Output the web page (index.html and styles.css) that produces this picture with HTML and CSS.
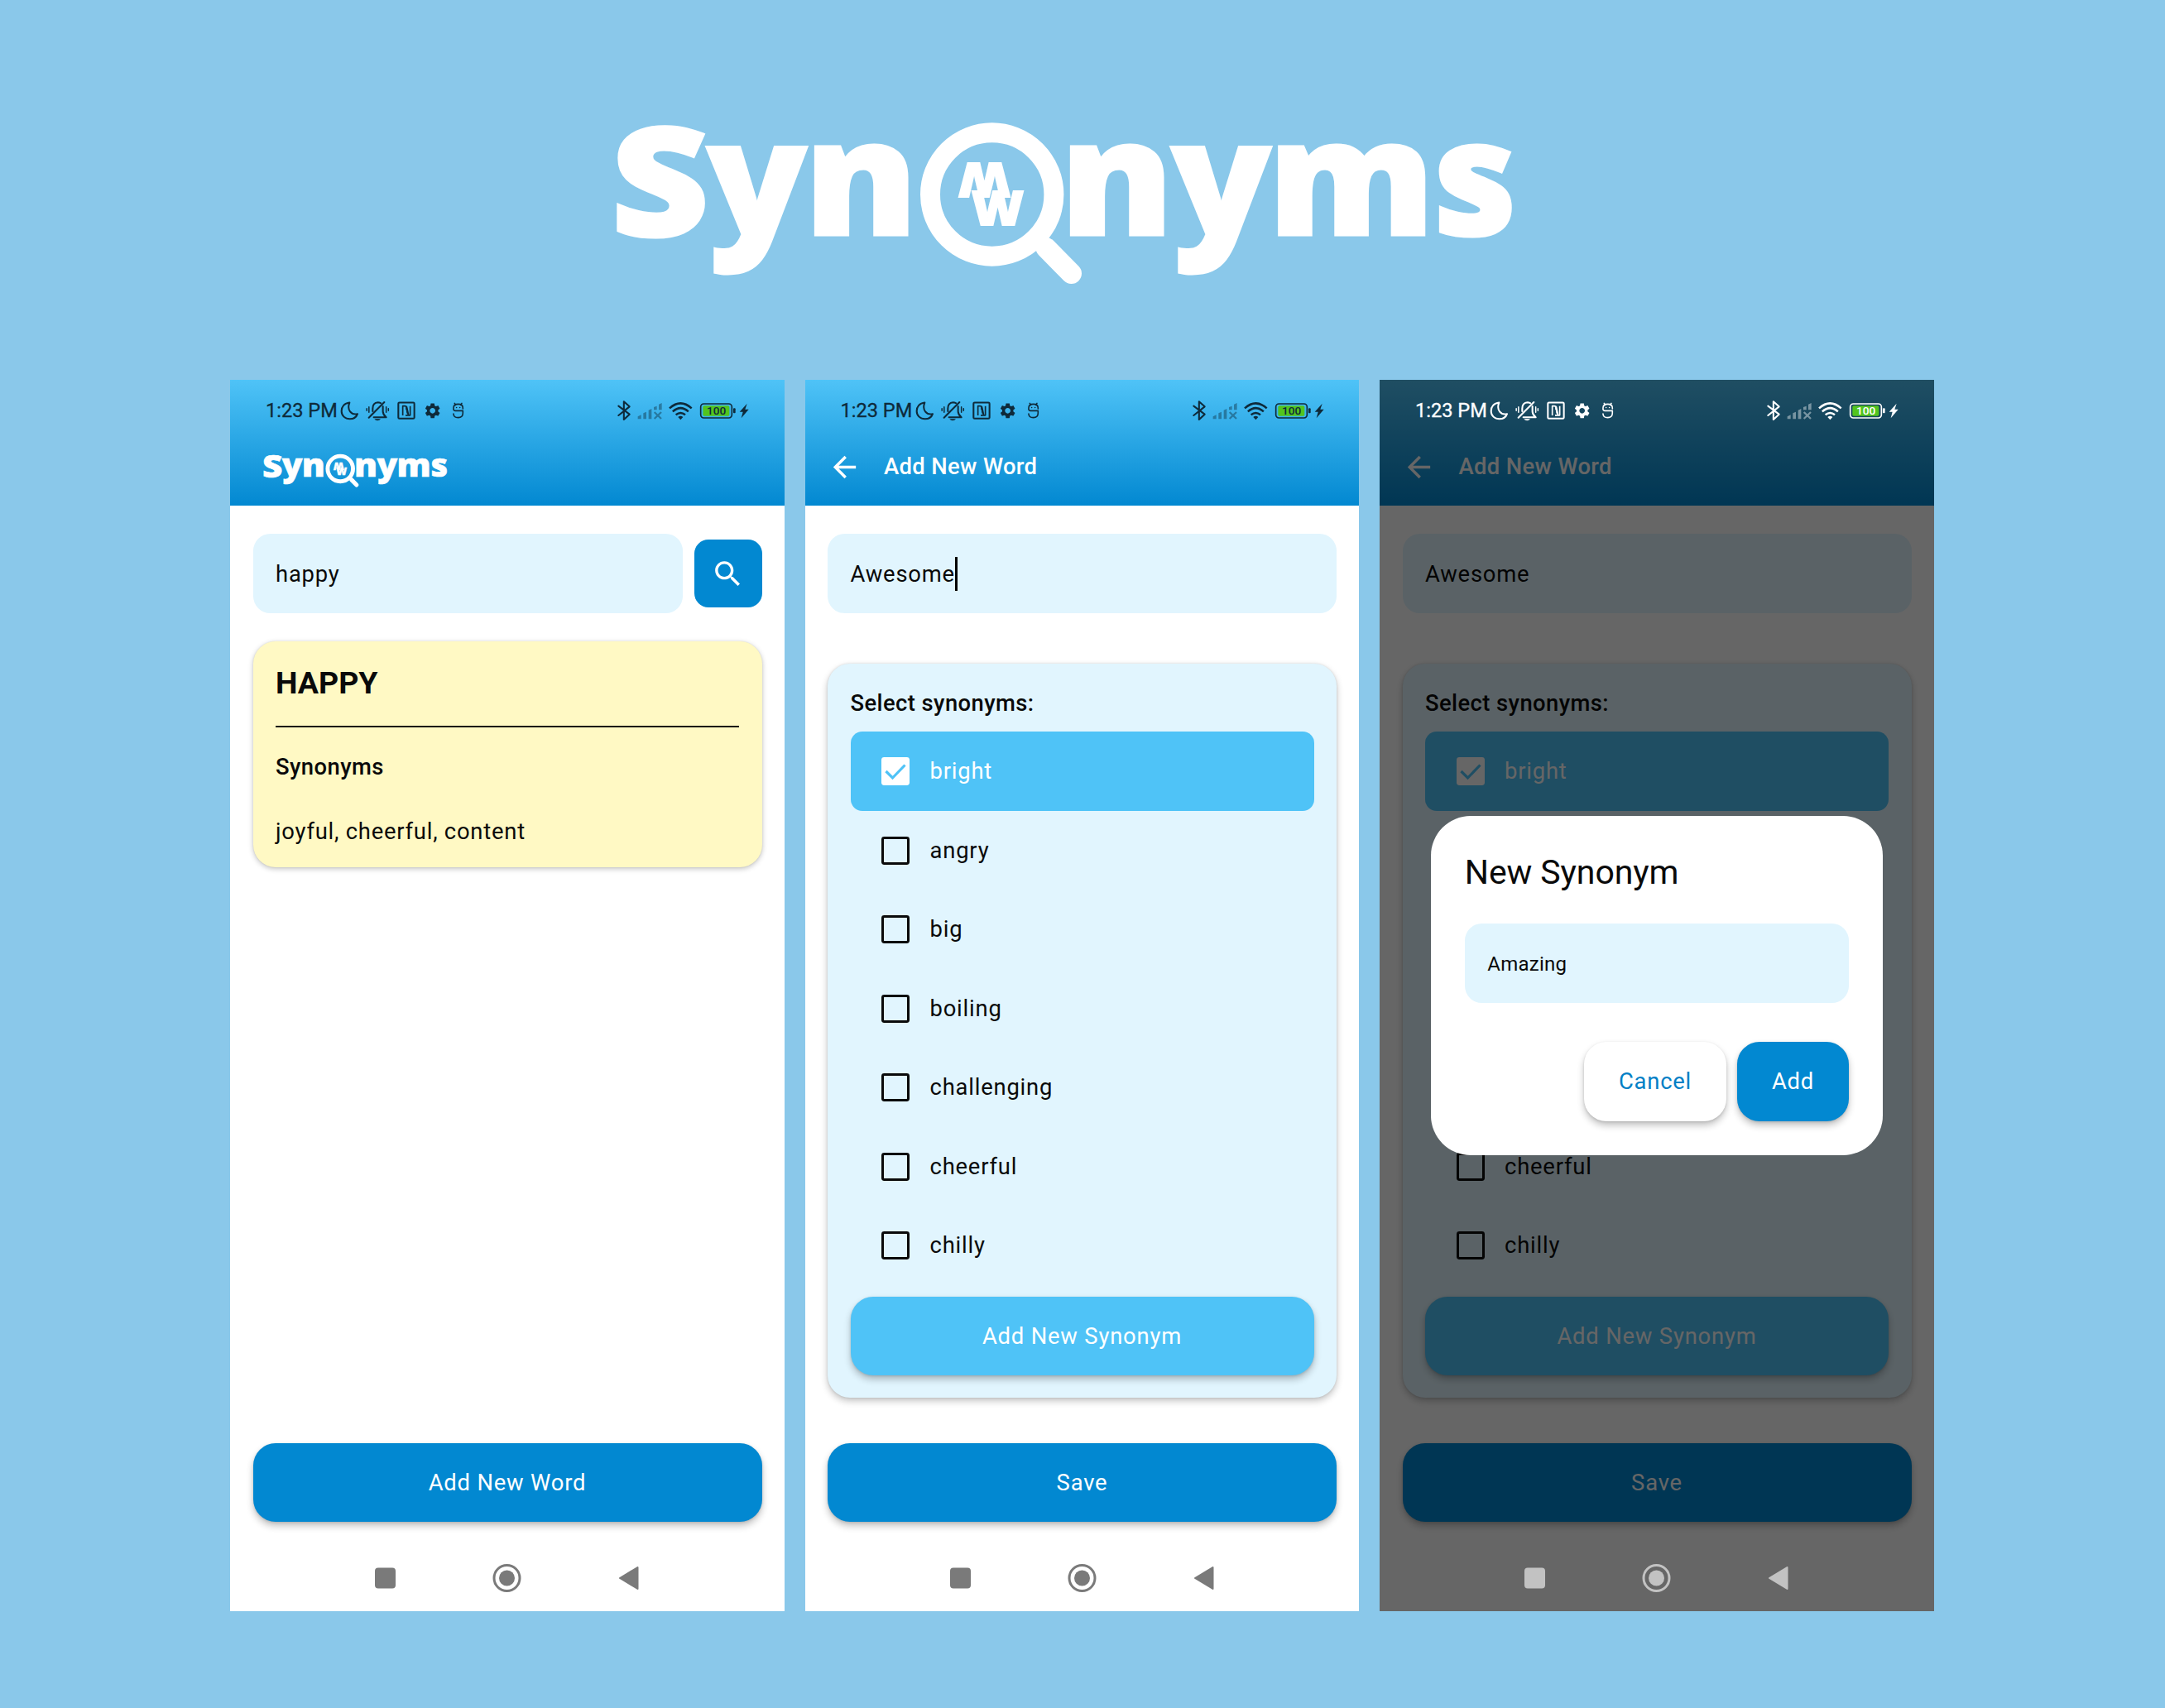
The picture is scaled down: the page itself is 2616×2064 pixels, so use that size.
FILE: index.html
```html
<!DOCTYPE html>
<html lang="en">
<head>
<meta charset="utf-8">
<title>Synonyms</title>
<link rel="stylesheet" href="styles.css">
</head>
<body>
<svg class="defs" aria-hidden="true">
  <symbol id="logo" viewBox="744 140 1088 210" overflow="visible">
    <g class="logo-word">
      <text class="logo-cap" x="738" y="285" textLength="119" lengthAdjust="spacingAndGlyphs">S</text>
      <text x="854" y="283.500" textLength="121" lengthAdjust="spacingAndGlyphs">y</text>
      <text x="972" y="283.500" textLength="137" lengthAdjust="spacingAndGlyphs">n</text>
      <text x="1281" y="283.500" textLength="137" lengthAdjust="spacingAndGlyphs">n</text>
      <text x="1415" y="283.500" textLength="121" lengthAdjust="spacingAndGlyphs">y</text>
      <text x="1532.500" y="283.500" textLength="201" lengthAdjust="spacingAndGlyphs">m</text>
      <text x="1732" y="283.500" textLength="101" lengthAdjust="spacingAndGlyphs">s</text>
    </g>
    <circle cx="1198.7" cy="235" r="74.7" fill="none" stroke="#fff" stroke-width="24"/>
    <path d="M1264 299.500L1294.500 330.500" stroke="#fff" stroke-width="25" stroke-linecap="round"/>
    <g class="logo-mark">
      <text x="1174" y="271.500" textLength="63" lengthAdjust="spacingAndGlyphs">W</text>
      <text x="1174" y="271.500" textLength="63" lengthAdjust="spacingAndGlyphs" transform="rotate(180 1197.500 234)">W</text>
    </g>
  </symbol>
  <symbol id="status-left" viewBox="420 95 460 90">
    <g fill="none" stroke="currentColor" stroke-width="6.200" stroke-linecap="round" stroke-linejoin="round">
      <path d="M457 108.500C438 110 428 124 428 139C428 156 441 168 458 168C472 168 482 161 486 149.500C464 155 446 135 457 108.500Z"/>
      <path d="M527 163L583 107"/>
      <path d="M541 140V130C541 117 549 109 560 108C564 108 567 109 570 110.500M578 122V141C578 151 583 156 590 162H545"/>
      <path d="M519.500 130V138M527.500 124V144M590 124V144M598 130V138" stroke-width="4.500"/>
      <rect x="634" y="108.500" width="58" height="58" rx="4"/>
      <path d="M650 155V121H658Q662 121 663 125L667 148M660 154.500H677V121M663 121V134" stroke-width="5" stroke-linecap="butt"/>
      <path d="M664 124L670 151" stroke-width="6"/>
      <path d="M834 134V128Q834 114 851 114Q868 114 868 128V131M838 111L842 117M864 111L860 117M834 132Q834 138 841 138H868V147Q868 163 851 163Q834 163 834 149" stroke-width="4.800"/>
    </g>
    <g fill="currentColor">
      <path d="M547 168H570Q566 174 558.500 174Q551 174 547 168Z"/>
      <circle cx="845" cy="126.500" r="2.500"/><circle cx="857" cy="126.500" r="2.500"/>
      <path transform="translate(724.500 104.500) scale(2.800)" d="M19.140 12.940c.04-.3.060-.61.060-.94 0-.32-.02-.64-.07-.94l2.030-1.580c.18-.14.230-.41.120-.61l-1.920-3.320c-.12-.22-.37-.29-.59-.22l-2.390.96c-.5-.38-1.030-.7-1.620-.94l-.36-2.540c-.04-.24-.24-.41-.48-.41h-3.840c-.24 0-.43.170-.47.410l-.36 2.540c-.59.240-1.130.570-1.620.94l-2.390-.96c-.22-.08-.47 0-.59.220L2.740 8.870c-.12.210-.08.470.12.610l2.030 1.580c-.05.3-.09.630-.09.940s.02.640.07.940l-2.030 1.580c-.18.140-.23.410-.12.610l1.920 3.320c.12.220.37.290.59.220l2.390-.96c.5.380 1.030.7 1.620.94l.36 2.540c.05.240.24.410.48.410h3.840c.24 0 .44-.17.470-.41l.36-2.540c.59-.24 1.130-.56 1.620-.94l2.390.96c.22.080.47 0 .59-.22l1.920-3.320c.12-.22.070-.47-.12-.61l-2.010-1.580zM12 15.600c-1.980 0-3.600-1.620-3.600-3.600s1.620-3.600 3.600-3.600 3.600 1.620 3.600 3.600-1.620 3.600-3.600 3.600z"/>
    </g>
  </symbol>
  <symbol id="status-right" viewBox="130 95 495 90" overflow="visible">
    <g fill="none" stroke="currentColor" stroke-width="6.200" stroke-linejoin="round">
      <path d="M143 121L183 151L162.500 170V105L183 123L143 155" stroke-linecap="round"/>
      <path d="M328 129Q368 93 408 129M339.500 141Q368 116 396.500 141M351 153Q368 139 385 153" stroke-width="7.500"/>
      <rect x="441" y="113" width="113" height="51" rx="11" stroke-width="5"/>
    </g>
    <g fill="currentColor">
      <path d="M359 161Q368 153 377 161L368 171Z"/>
      <rect x="559" y="129" width="8" height="18" rx="3"/>
      <path d="M609 112L582 142H594L588 165L615 133H602Z"/>
    </g>
    <g fill="currentColor" opacity=".42">
      <path d="M213 168V159L225 153V168ZM233 168V147L244 142V168ZM252 168V136L263 131V168ZM271 135V125L282 121V135ZM289 135V115L300 110V135Z"/>
      <path d="M273 143L298 167M298 143L273 167" stroke="currentColor" stroke-width="7"/>
    </g>
    <rect x="449" y="120" width="96" height="37" rx="5" fill="#52c41e"/>
    <text class="battery-text" x="498" y="152" text-anchor="middle" textLength="70" lengthAdjust="spacingAndGlyphs">100</text>
  </symbol>
  <symbol id="arrow" viewBox="0 0 24 24"><path fill="currentColor" d="M20 11H7.830l5.590-5.590L12 4l-8 8 8 8 1.410-1.410L7.830 13H20z"/></symbol>
  <symbol id="nav-icons" viewBox="0 0 320 36">
    <rect x="0" y="5.500" width="25" height="25" rx="4" fill="currentColor"/>
    <circle cx="159.500" cy="18" r="15.500" fill="none" stroke="currentColor" stroke-width="3"/>
    <circle cx="159.500" cy="18" r="9.500" fill="currentColor"/>
    <path d="M296 18L317.500 5V31Z" fill="currentColor" stroke="currentColor" stroke-width="2" stroke-linejoin="round"/>
  </symbol>
</svg>

<main class="board">
  <svg class="hero" role="img" aria-label="Synonyms"><use href="#logo"/></svg>

  <div class="phones">
    <section class="phone">
      <header class="head">
        <div class="status"><span class="time">1:23 PM</span><svg class="st-left"><use href="#status-left"/></svg><svg class="st-right"><use href="#status-right"/></svg></div>
        <div class="appbar"><svg class="small-logo" role="img" aria-label="Synonyms"><use href="#logo"/></svg></div>
      </header>
      <div class="body">
        <div class="search">
          <div class="field">happy</div>
          <div class="search-btn"><svg viewBox="0 0 24 24"><path fill="#fff" d="M15.500 14h-.79l-.28-.27C15.410 12.590 16 11.110 16 9.500 16 5.910 13.090 3 9.500 3S3 5.910 3 9.500 5.910 16 9.500 16c1.610 0 3.090-.59 4.230-1.570l.27.280v.79l5 4.990L20.490 19l-4.990-5zm-6 0C7.010 14 5 11.990 5 9.500S7.010 5 9.500 5 14 7.010 14 9.500 11.990 14 9.500 14z"/></svg></div>
        </div>
        <article class="word-card">
          <h2>HAPPY</h2>
          <h3>Synonyms</h3>
          <p>joyful, cheerful, content</p>
        </article>
        <div class="btn main-btn">Add New Word</div>
      </div>
      <svg class="nav"><use href="#nav-icons"/></svg>
    </section>

    <section class="phone">
      <header class="head">
        <div class="status"><span class="time">1:23 PM</span><svg class="st-left"><use href="#status-left"/></svg><svg class="st-right"><use href="#status-right"/></svg></div>
        <div class="appbar"><svg class="back"><use href="#arrow"/></svg><h1>Add New Word</h1></div>
      </header>
      <div class="body">
        <div class="field">Awesome<span class="caret"></span></div>
        <div class="list-card">
          <h3>Select synonyms:</h3>
          <div class="item on"><svg class="box" viewBox="0 0 34 34"><rect width="34" height="34" rx="3.400" fill="#fff"/><path d="M5.500 17L13.500 25L28.500 9.500" fill="none" stroke="#4fc3f7" stroke-width="3.200"/></svg>bright</div>
          <div class="item"><span class="box"></span>angry</div>
          <div class="item"><span class="box"></span>big</div>
          <div class="item"><span class="box"></span>boiling</div>
          <div class="item"><span class="box"></span>challenging</div>
          <div class="item"><span class="box"></span>cheerful</div>
          <div class="item"><span class="box"></span>chilly</div>
          <div class="btn light">Add New Synonym</div>
        </div>
        <div class="btn main-btn">Save</div>
      </div>
      <svg class="nav"><use href="#nav-icons"/></svg>
    </section>

    <section class="phone dimmed">
      <header class="head">
        <div class="status"><span class="time">1:23 PM</span><svg class="st-left"><use href="#status-left"/></svg><svg class="st-right"><use href="#status-right"/></svg></div>
        <div class="appbar"><svg class="back"><use href="#arrow"/></svg><h1>Add New Word</h1></div>
      </header>
      <div class="body">
        <div class="field">Awesome</div>
        <div class="list-card">
          <h3>Select synonyms:</h3>
          <div class="item on"><svg class="box" viewBox="0 0 34 34"><rect width="34" height="34" rx="3.400" fill="#fff"/><path d="M5.500 17L13.500 25L28.500 9.500" fill="none" stroke="#4fc3f7" stroke-width="3.200"/></svg>bright</div>
          <div class="item"></div>
          <div class="item"></div>
          <div class="item"></div>
          <div class="item"></div>
          <div class="item"><span class="box"></span>cheerful</div>
          <div class="item"><span class="box"></span>chilly</div>
          <div class="btn light">Add New Synonym</div>
        </div>
        <div class="btn main-btn">Save</div>
      </div>
      <svg class="nav"><use href="#nav-icons"/></svg>
      <div class="scrim">
        <div class="dialog">
          <h2>New Synonym</h2>
          <div class="field">Amazing</div>
          <div class="actions"><div class="btn cancel">Cancel</div><div class="btn add">Add</div></div>
        </div>
      </div>
    </section>
  </div>
</main>
</body>
</html>
```
FILE: styles.css
```css
* { box-sizing: border-box; }
body {
  margin: 0;
  background: #8ac8ea;
  font-family: Roboto, "Liberation Sans", sans-serif;
  font-size: 27.4px;
  letter-spacing: .8px;
  color: #0a0a0a;
}
h1, h2, h3, p { margin: 0; }
svg { display: block; flex: none; }
.defs { position: absolute; width: 0; height: 0; }

.board {
  width: 2616px;
  height: 2064px;
  padding: 140px 0 0 278px;
  overflow: hidden;
}
.hero { width: 1088px; height: 210px; margin-left: 466px; overflow: visible; }
.logo-word {
  font-family: "Open Sans", sans-serif;
  font-weight: 800;
  font-size: 194px;
  letter-spacing: 0;
  fill: #fff;
  stroke: #fff;
  stroke-width: 3px;
}
.logo-cap { font-size: 182px; }
.logo-mark {
  font-family: "Open Sans", sans-serif;
  font-weight: 800;
  font-size: 57px;
  letter-spacing: 0;
  fill: #fff;
  stroke: #fff;
  stroke-width: 2px;
}

.phones { display: flex; gap: 25px; margin-top: 109px; }
.phone {
  position: relative;
  display: flex;
  flex-direction: column;
  flex: none;
  width: 669.500px;
  height: 1488px;
  background: #fff;
}
.head {
  height: 152px;
  background: linear-gradient(#4fc3f7, #0288d1);
  color: #fff;
}
.status {
  display: flex;
  align-items: center;
  height: 74px;
  padding: 0 39.200px 0 43px;
  color: #0e2a3a;
}
.time {
  width: 89px;
  font-size: 23.600px;
  letter-spacing: 0;
  white-space: nowrap;
  -webkit-text-stroke: .3px currentColor;
}
.st-left { width: 153.300px; height: 30px; margin-top: 1px; }
.st-right { width: 165px; height: 30px; margin: 1px 0 0 auto; overflow: visible; }
.battery-text { font-size: 38px; font-weight: 500; letter-spacing: 0; fill: currentColor; }
.appbar { display: flex; align-items: center; height: 62px; padding-left: 27px; }
.small-logo { width: 223px; height: 43px; margin: 8px 0 0 13px; overflow: visible; }
.back { width: 41px; height: 41px; }
.appbar h1 {
  margin-left: 27.500px;
  font-size: 27.4px;
  font-weight: 500;
  letter-spacing: .35px;
}

.body {
  flex: 1;
  display: flex;
  flex-direction: column;
  padding: 34px 27px 28px 27.500px;
}
.field {
  display: flex;
  align-items: center;
  flex: none;
  height: 96px;
  padding: 1px 0 0 27.500px;
  border-radius: 20.500px;
  background: #e1f5fe;
}
.caret { width: 3.500px; height: 41px; background: #000; }
.search { display: flex; align-items: center; gap: 14px; }
.search .field { flex: 1; }
.search-btn {
  display: grid;
  place-items: center;
  width: 82px;
  height: 82px;
  border-radius: 17px;
  background: #0288d1;
}
.search-btn svg { width: 41px; height: 41px; }

.word-card {
  height: 273px;
  margin-top: 34px;
  padding: 26px 27.500px;
  border-radius: 27px;
  background: #fff9c4;
  box-shadow: 0 2px 6px rgba(0, 0, 0, .24), 0 0 2px rgba(0, 0, 0, .1);
}
.word-card h2 {
  height: 78px;
  border-bottom: 2px solid #111;
  font-size: 37.500px;
  line-height: 48px;
  letter-spacing: 0;
}
h3 { font-size: 27.4px; line-height: 41px; font-weight: 500; letter-spacing: .42px; }
.word-card h3 { margin-top: 28px; }
.word-card p { margin-top: 36.500px; line-height: 41px; letter-spacing: .77px; }

.btn {
  display: flex;
  align-items: center;
  justify-content: center;
  flex: none;
  height: 95.500px;
  padding-top: 1px;
  border-radius: 27px;
  color: #fff;
  background: #0288d1;
  box-shadow: 0 5px 9px rgba(0, 0, 0, .24), 0 1px 3px rgba(0, 0, 0, .12);
}
.main-btn { margin-top: auto; }

.list-card {
  margin-top: 61px;
  padding: 28px 27.500px 26.500px;
  border-radius: 27px;
  background: #e1f5fe;
  box-shadow: 0 4px 9px rgba(0, 0, 0, .24), 0 0 3px rgba(0, 0, 0, .12);
}
.list-card h3 { margin-bottom: 13px; }
.item {
  display: flex;
  align-items: center;
  gap: 24.500px;
  height: 95.500px;
  padding: .5px 0 0 37.500px;
}
.item.on { border-radius: 14px; background: #4fc3f7; color: #fff; }
.box { width: 34px; height: 34px; }
span.box { border: 3.400px solid #0a0a0a; border-radius: 3.400px; }
.light { margin-top: 14px; background: #4fc3f7; }

.nav { width: 320px; height: 36px; margin: 22px 0 22px 175px; color: #7a7a7a; }

.dimmed .status { position: relative; z-index: 2; color: #fff; }
.dimmed .nav { position: relative; z-index: 2; color: #c2c2c2; }
.scrim {
  position: absolute;
  inset: 0;
  z-index: 1;
  display: flex;
  justify-content: center;
  align-items: flex-start;
  padding-top: 527px;
  background: rgba(0, 0, 0, .6);
}
.dialog {
  width: 546px;
  height: 409.500px;
  padding: 41px;
  border-radius: 48px;
  background: #fff;
}
.dialog h2 { font-size: 41px; line-height: 55px; font-weight: 400; letter-spacing: -.1px; }
.dialog .field { margin-top: 34px; font-size: 24px; letter-spacing: .25px; }
.actions { display: flex; justify-content: flex-end; gap: 13.500px; margin-top: 47px; }
.cancel { width: 171.500px; background: #fff; color: #0280c6; }
.add { width: 134.500px; }
```
